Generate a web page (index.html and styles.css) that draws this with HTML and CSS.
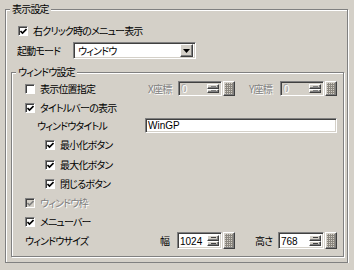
FILE: index.html
```html
<!DOCTYPE html>
<html lang="ja">
<head>
    <meta charset="UTF-8">
    <title>表示設定</title>
    <link rel="stylesheet" href="styles.css">
</head>
<body>
    <fieldset class="group outer">
        <legend>表示設定</legend>
        <div class="row r-menu">
            <span class="check on"></span><span>右クリック時のメニュー表示</span>
        </div>
        <div class="row r-mode">
            <span class="w-mode">起動モード</span>
            <div class="select sunken">
                <span class="sel-text">ウィンドウ</span>
                <span class="drop raised"><svg width="7" height="4" viewBox="0 0 7 4"><path d="M0 0h7L3.5 4z" fill="#000"/></svg></span>
            </div>
        </div>

        <fieldset class="group inner">
            <legend>ウィンドウ設定</legend>
            <div class="row r-pos">
                <span class="cb w-pos"><span class="check"></span>表示位置指定</span>
                <span class="dim w-x">X座標</span>
                <div class="spin">
                    <div class="edit sunken off"><span class="val">0</span><span class="updown"><span class="ud raised"><i></i></span><span class="ud raised"><i></i></span></span></div>
                    <span class="pick raised"></span>
                </div>
                <span class="dim w-y">Y座標</span>
                <div class="spin">
                    <div class="edit sunken off"><span class="val">0</span><span class="updown"><span class="ud raised"><i></i></span><span class="ud raised"><i></i></span></span></div>
                    <span class="pick raised"></span>
                </div>
            </div>
            <div class="row r-bar">
                <span class="check on"></span><span>タイトルバーの表示</span>
            </div>
            <div class="row r-title">
                <span class="w-title">ウィンドウタイトル</span>
                <div class="text sunken">WinGP</div>
            </div>
            <div class="row sub r-min">
                <span class="check on"></span><span>最小化ボタン</span>
            </div>
            <div class="row sub r-max">
                <span class="check on"></span><span>最大化ボタン</span>
            </div>
            <div class="row sub r-close">
                <span class="check on"></span><span>閉じるボタン</span>
            </div>
            <div class="row r-frame">
                <span class="check on disabled"></span><span class="dim">ウィンドウ枠</span>
            </div>
            <div class="row r-menubar">
                <span class="check on"></span><span>メニューバー</span>
            </div>
            <div class="row r-size">
                <span class="w-size">ウィンドウサイズ</span>
                <span class="w-w">幅</span>
                <div class="spin big">
                    <div class="edit sunken"><span class="val">1024</span><span class="updown"><span class="ud raised"><i></i></span><span class="ud raised"><i></i></span></span></div>
                    <span class="pick raised"></span>
                </div>
                <span class="w-h">高さ</span>
                <div class="spin big wide">
                    <div class="edit sunken"><span class="val">768</span><span class="updown"><span class="ud raised"><i></i></span><span class="ud raised"><i></i></span></span></div>
                    <span class="pick raised"></span>
                </div>
            </div>
        </fieldset>
    </fieldset>
</body>
</html>
```

FILE: styles.css
```css
body {
    margin: 0;
    padding-top: 2px;
    background: #d4d0c8;
    color: #000;
    font-family: "Noto Sans CJK JP", sans-serif;
    font-size: 10px;
    font-feature-settings: "palt";
    letter-spacing: -0.8px;
    line-height: 14px;
}

/* etched group box */
.group {
    margin: 0;
    padding: 0;
    min-width: 0;
    border: 1px solid #808080;
    box-shadow: inset 1px 1px #fff, 1px 1px #fff;
}
.group legend {
    margin-left: 4px;
    padding: 0 2px;
    line-height: 14px;
    background: #d4d0c8;
}
.outer {
    margin: 0 6px 0 5px;
    padding-bottom: 5px;
}
.inner {
    margin: 6px 3px 0 5px;
    padding-bottom: 7px;
}

.row {
    display: flex;
    align-items: center;
    height: 14px;
}
.sub { margin-left: 33px; }

.r-menu { margin: 8px 0 0 12px; }
.r-mode { margin: 4px 0 0 11px; height: 17px; }
.r-pos { margin: 2px 0 0 13px; height: 15px; }
.r-bar { margin: 5px 0 0 13px; }
.r-title { margin: 3px 0 0 25px; height: 15px; }
.r-min { margin-top: 5px; }
.r-max { margin-top: 6px; }
.r-close { margin-top: 5px; }
.r-frame { margin: 5px 0 0 13px; }
.r-menubar { margin: 5px 0 0 13px; }
.r-size { margin: 3px 0 0 13px; height: 17px; }

.w-mode { width: 56px; }
.w-pos { width: 123px; }
.w-x { width: 30px; }
.w-y { width: 31px; margin-left: 14px; }
.w-title { width: 108px; }
.w-size { width: 135px; }
.w-w { width: 17px; }
.w-h { width: 23px; margin-left: 20px; }

.cb {
    display: flex;
    align-items: center;
}

.dim {
    color: #808080;
    text-shadow: 1px 1px #fff;
}

/* classic 3d borders */
.sunken {
    box-sizing: border-box;
    border: 1px solid;
    border-color: #808080 #fff #fff #808080;
    box-shadow: inset 1px 1px #404040, inset -1px -1px #d4d0c8;
    background: #fff;
}
.raised {
    box-sizing: border-box;
    border: 1px solid;
    border-color: #fff #404040 #404040 #fff;
    box-shadow: inset -1px -1px #808080;
    background: #d4d0c8;
}

.check {
    box-sizing: border-box;
    width: 10px;
    height: 10px;
    margin-right: 5px;
    flex: none;
    border: 1px solid;
    border-color: #808080 #fff #fff #808080;
    box-shadow: inset 1px 1px #404040;
    background: #fff center no-repeat;
}
.check.on {
    background-image: url("data:image/svg+xml,%3Csvg xmlns='http://www.w3.org/2000/svg' width='7' height='7'%3E%3Cpath d='M0.5 3l2 2 4-4' fill='none' stroke='%23000' stroke-width='1.6'/%3E%3C/svg%3E");
}
.check.on.disabled {
    background-color: #d4d0c8;
    background-image: url("data:image/svg+xml,%3Csvg xmlns='http://www.w3.org/2000/svg' width='7' height='7'%3E%3Cpath d='M0.5 3l2 2 4-4' fill='none' stroke='%23808080' stroke-width='1.6'/%3E%3C/svg%3E");
}

.select {
    display: flex;
    align-items: center;
    width: 123px;
    height: 17px;
    padding: 2px;
}
.sel-text {
    flex: 1;
    padding-left: 2px;
}
.drop {
    width: 13px;
    height: 13px;
    display: flex;
    align-items: center;
    justify-content: center;
}

.text {
    width: 192px;
    height: 15px;
    padding: 0 2px;
    line-height: 13px;
    letter-spacing: 0;
    font-family: "Liberation Sans", sans-serif;
}

/* number edit with up-down and picker button */
.spin {
    display: flex;
    height: 15px;
}
.spin.big { height: 17px; }
.edit {
    display: flex;
    width: 44px;
    height: 100%;
    padding: 2px;
}
.big .edit { width: 45px; }
.big.wide .edit { width: 46px; }
.edit.off { background: #d4d0c8; }
.val {
    flex: 1;
    line-height: 11px;
    letter-spacing: 0;
    font-family: "Liberation Sans", sans-serif;
}
.big .val { line-height: 13px; }
.off .val {
    color: #fff;
    text-shadow: -1px -1px #a0a0a0;
    padding-left: 1px;
}
.updown {
    display: flex;
    flex-direction: column;
    width: 12px;
}
.ud {
    flex: 1;
    display: flex;
    align-items: center;
    justify-content: center;
}
.ud i {
    display: block;
    width: 5px;
    height: 1px;
    background: #404040;
}
.off .ud i { background: #808080; }
.pick {
    width: 12px;
    height: 100%;
    margin-left: 1px;
    background-color: #d4d0c8;
    background-image:
        linear-gradient(90deg, #8c8880 1px, transparent 1px),
        linear-gradient(#8c8880 1px, transparent 1px);
    background-size: 2px 2px;
    background-position: 2px 2px;
    background-clip: content-box;
    padding: 1px;
}
```
